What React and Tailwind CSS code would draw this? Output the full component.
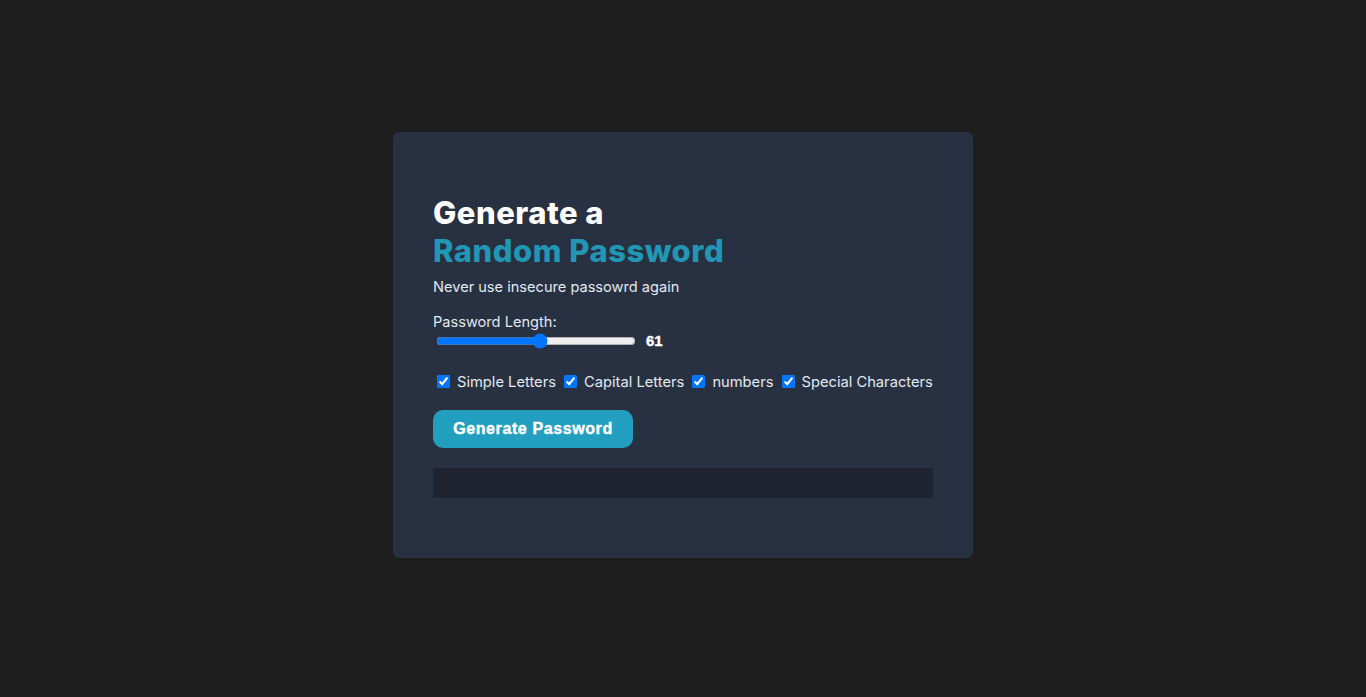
import { useState } from "react";

const options = [
  { id: "lower", label: "Simple Letters" },
  { id: "upper", label: "Capital Letters" },
  { id: "numbers", label: "numbers" },
  { id: "special", label: "Special Characters" },
];

const App = () => {
  const [length, setLength] = useState(61);
  const [checked, setChecked] = useState({
    lower: true,
    upper: true,
    numbers: true,
    special: true,
  });

  const toggle = (id) => setChecked({ ...checked, [id]: !checked[id] });

  return (
    <div className="min-h-screen bg-[#1e1e1e] pt-[132px] font-['Inter',sans-serif]">
      <div className="mx-auto w-[580px] rounded-md bg-[#283142] px-10 pt-[62px] pb-[60px]">
        <h1 className="text-[31px] leading-[38px] font-extrabold tracking-[0.5px] text-white">
          Generate a
          <br />
          <span className="text-[#2196b5]">Random Password</span>
        </h1>
        <p className="mt-1.5 text-[14.6px] leading-[22px] text-[#e2e8f0]">
          Never use insecure passowrd again
        </p>

        <div className="mt-[13px] text-[14.6px] leading-[22px] text-[#e2e8f0]">
          Password Length:
        </div>
        <div className="-mt-[3px] flex items-center">
          <input
            type="range"
            min="8"
            max="110"
            value={length}
            onChange={(e) => setLength(e.target.value)}
            className="my-0 ml-[3px] h-4 w-[200px]"
          />
          <span className="ml-[10px] font-['Liberation_Sans',sans-serif] text-[15px] font-bold text-white [-webkit-text-stroke:0.4px_white]">
            {length}
          </span>
        </div>

        <div className="mt-[18px] whitespace-nowrap text-[14.7px] leading-[22px] text-[#e2e8f0]">
          {options.map((opt) => (
            <span key={opt.id}>
              <input
                type="checkbox"
                id={opt.id}
                checked={checked[opt.id]}
                onChange={() => toggle(opt.id)}
                className="mt-[3px] mr-[3px] mb-[3px] ml-1 align-[-1px]"
              />
              <label htmlFor={opt.id} className="ml-1">
                {opt.label}
              </label>{" "}
            </span>
          ))}
        </div>

        <button className="mt-[17px] h-[38px] w-[200px] rounded-[10px] bg-[#229fbf] font-['Liberation_Sans',sans-serif] text-[16px] font-bold tracking-[0.6px] text-white [-webkit-text-stroke:0.4px_white]">
          Generate Password
        </button>

        <div className="mt-5 h-[30px] w-full bg-[#1f2430]"></div>
      </div>
    </div>
  );
};

export default App;
